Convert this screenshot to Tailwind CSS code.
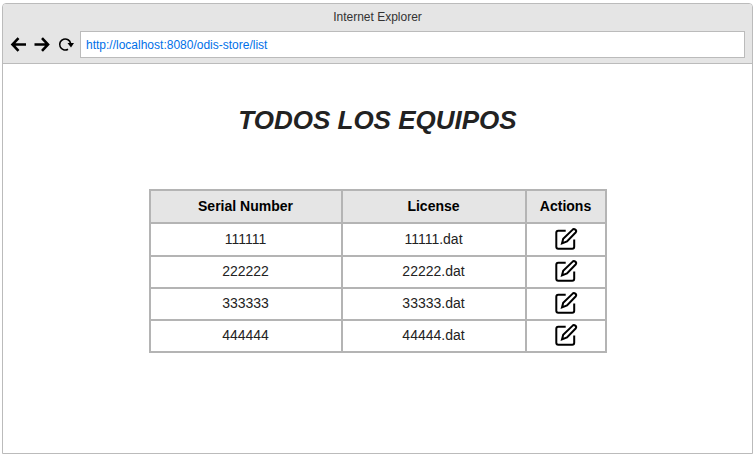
<!DOCTYPE html>
<html lang="es">
<head>
<meta charset="utf-8">
<title>Internet Explorer</title>
<script src="https://cdn.jsdelivr.net/npm/@tailwindcss/browser@4"></script>
</head>
<body class="min-h-screen flex flex-col bg-white px-[2px] pt-[3px] pb-[2px] font-['Liberation_Sans',Arial,sans-serif]">
<svg class="hidden">
  <symbol id="edit" viewBox="0 0 24 24">
    <path d="M11.700 3.800H4.300a2 2 0 0 0-2 2V19.800a2 2 0 0 0 2 2H18.200a2 2 0 0 0 2-2V12.500"/>
    <path d="M18.400 2.900a2 2 0 0 1 3.200 2.600L13 14.500 8 16.400 9.200 11.800z"/>
  </symbol>
</svg>
<div class="grow flex flex-col border border-[#bbb] rounded-t-[4px] overflow-hidden">
  <header class="bg-[#e5e5e5] border-b border-[#bbb] px-[7px] pt-[3px] pb-[5px]">
    <p class="text-center text-xs leading-5 text-[#333]">Internet Explorer</p>
    <div class="flex items-center pt-1">
      <nav class="flex items-center gap-2 pr-[6px]">
        <button aria-label="Atrás"><svg class="w-4 h-4" viewBox="0 0 16 16" fill="none" stroke="#000" stroke-width="2.600"><path d="M16 7.500H3M8.500 1.200L2.500 7.500 8.500 13.800"/></svg></button>
        <button aria-label="Adelante"><svg class="w-4 h-4" viewBox="0 0 16 16" fill="none" stroke="#000" stroke-width="2.600"><path d="M0.500 7.500h13M8 1.200L14 7.500 8 13.800"/></svg></button>
        <button aria-label="Recargar"><svg class="w-4 h-4" viewBox="0 0 16 16" fill="none" stroke="#000" stroke-width="1.600"><path d="M10 12.200A5.500 5.500 0 1 1 12.600 6.500"/><path d="M9.500 6h6.500l-3 4.500z" fill="#000" stroke="none"/></svg></button>
      </nav>
      <input type="text" aria-label="Dirección" value="http://localhost:8080/odis-store/list" class="grow min-w-0 h-[27px] bg-white border border-[#bbb] px-[5px] text-xs text-[#0070e8]">
    </div>
  </header>
  <main class="grow flex flex-col items-center bg-white px-4 pt-10">
    <h1 class="text-[26px] leading-8 font-bold italic text-[#222]">TODOS LOS EQUIPOS</h1>
    <table class="mt-[53px] w-full max-w-[458px] table-fixed border-collapse text-sm leading-5 text-center text-black">
      <colgroup><col><col class="w-[184px]"><col class="w-20"></colgroup>
      <thead class="bg-[#e5e5e5]"><tr class="h-[33px]">
        <th class="border-2 border-[#b4b4b4] pb-[2px]">Serial Number</th><th class="border-2 border-[#b4b4b4] pb-[2px]">License</th><th class="border-2 border-[#b4b4b4] pb-[2px]">Actions</th>
      </tr></thead>
      <tbody class="text-[#222]">
        <tr class="h-[33px]"><td class="border-2 border-[#b4b4b4] pb-[2px]">111111</td><td class="border-2 border-[#b4b4b4] pb-[2px]">11111.dat</td><td class="border-2 border-[#b4b4b4] pb-[2px]"><button aria-label="Editar 111111" class="block mx-auto"><svg class="w-6 h-6" fill="none" stroke="#000" stroke-width="2"><use href="#edit"/></svg></button></td></tr>
        <tr class="h-8"><td class="border-2 border-[#b4b4b4] pb-[2px]">222222</td><td class="border-2 border-[#b4b4b4] pb-[2px]">22222.dat</td><td class="border-2 border-[#b4b4b4] pb-[2px]"><button aria-label="Editar 222222" class="block mx-auto"><svg class="w-6 h-6" fill="none" stroke="#000" stroke-width="2"><use href="#edit"/></svg></button></td></tr>
        <tr class="h-8"><td class="border-2 border-[#b4b4b4] pb-[2px]">333333</td><td class="border-2 border-[#b4b4b4] pb-[2px]">33333.dat</td><td class="border-2 border-[#b4b4b4] pb-[2px]"><button aria-label="Editar 333333" class="block mx-auto"><svg class="w-6 h-6" fill="none" stroke="#000" stroke-width="2"><use href="#edit"/></svg></button></td></tr>
        <tr class="h-8"><td class="border-2 border-[#b4b4b4] pb-[2px]">444444</td><td class="border-2 border-[#b4b4b4] pb-[2px]">44444.dat</td><td class="border-2 border-[#b4b4b4] pb-[2px]"><button aria-label="Editar 444444" class="block mx-auto"><svg class="w-6 h-6" fill="none" stroke="#000" stroke-width="2"><use href="#edit"/></svg></button></td></tr>
      </tbody>
    </table>
  </main>
</div>
</body>
</html>
